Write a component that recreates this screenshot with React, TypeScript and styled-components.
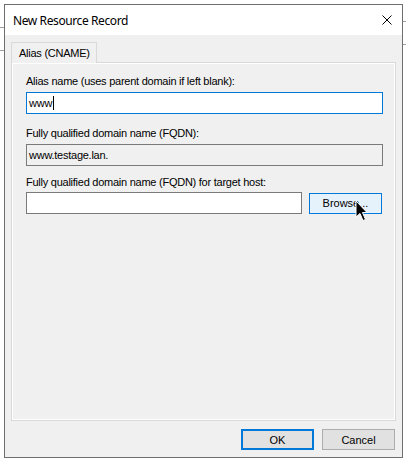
import React from "react";
import styled, { createGlobalStyle } from "styled-components";

const GlobalStyle = createGlobalStyle`
  html, body { margin: 0; padding: 0; background: #ffffff; }
  body { width: 406px; height: 461px; overflow: hidden; }
  * { box-sizing: border-box; }
`;

const Screen = styled.div`
  position: relative;
  width: 406px;
  height: 461px;
  padding: 4px 0 0 4px;
  background: #ffffff;
`;

const BackLine = styled.div<{ $top: number; $left: number; $width: number }>`
  position: absolute;
  top: ${(p) => p.$top}px;
  left: ${(p) => p.$left}px;
  width: ${(p) => p.$width}px;
  height: 1px;
  background: #a0a0a0;
`;

const Window = styled.div`
  position: relative;
  width: 399px;
  height: 454px;
  border: 1px solid #6f6f6f;
  display: flex;
  flex-direction: column;
  background: #f0f0f0;
`;

const TitleBar = styled.div`
  height: 30px;
  background: #ffffff;
  display: flex;
  align-items: center;
  justify-content: space-between;
  padding: 0 9px 0 8px;
  font-family: "Noto Sans", "Open Sans", sans-serif;
  font-size: 12px;
  letter-spacing: -0.4px;
  color: #000;
`;

const CloseIcon = styled.svg`
  width: 10px;
  height: 10px;
  margin-right: 1px;
  margin-top: -1px;
`;

const Body = styled.div`
  flex: 1;
  display: flex;
  flex-direction: column;
  padding: 7px 6px 7px 6px;
  font-family: "Liberation Sans", Arial, sans-serif;
  font-size: 11px;
  letter-spacing: -0.25px;
  color: #000;
`;

const TabStrip = styled.div`
  display: flex;
  height: 20px;
  position: relative;
  z-index: 1;
`;

const Tab = styled.div`
  width: 86px;
  height: 21px;
  border: 1px solid #d9d9d9;
  border-bottom: none;
  background: #f0f0f0;
  display: flex;
  align-items: center;
  padding: 0 0 1px 7px;
  white-space: nowrap;
`;

const Panel = styled.div`
  width: 385px;
  height: 359px;
  border: 1px solid #d9d9d9;
  box-shadow: inset 0 0 0 1px #ffffff;
  display: flex;
  flex-direction: column;
  padding: 9px 11px 0 14px;
`;

const Label = styled.div`
  height: 18px;
  display: flex;
  align-items: center;
  white-space: nowrap;
`;

const Field = styled.div<{ $tone: "focus" | "disabled" | "normal"; $width?: number }>`
  width: ${(p) => (p.$width ? `${p.$width}px` : "357px")};
  height: 22px;
  border: 1px solid
    ${(p) => (p.$tone === "focus" ? "#0078d7" : "#7a7a7a")};
  background: ${(p) => (p.$tone === "disabled" ? "#f0f0f0" : "#ffffff")};
  display: flex;
  align-items: center;
  padding: 0 0 0 2px;
`;

const Caret = styled.span`
  display: inline-block;
  width: 1px;
  height: 14px;
  background: #000;
  margin-left: 1px;
`;

const Group = styled.div<{ $gap: number; $inner: number }>`
  display: flex;
  flex-direction: column;
  gap: ${(p) => p.$inner}px;
  margin-top: ${(p) => p.$gap}px;
`;

const Row = styled.div`
  display: flex;
  align-items: center;
  gap: 7px;
`;

const Button = styled.div<{ $focus?: boolean; $hover?: boolean }>`
  position: relative;
  width: 73px;
  height: 21px;
  border: 1px solid ${(p) => (p.$focus || p.$hover ? "#0078d7" : "#adadad")};
  box-shadow: ${(p) => (p.$focus ? "inset 0 0 0 1px #0078d7" : "none")};
  background: ${(p) => (p.$hover ? "#e5f1fb" : "#e1e1e1")};
  display: flex;
  align-items: center;
  justify-content: center;
  letter-spacing: 0;
`;

const Footer = styled.div`
  margin-top: auto;
  display: flex;
  justify-content: flex-end;
  gap: 8px;
  padding-right: 1px;
`;

const Cursor = styled.svg`
  position: absolute;
  left: 350px;
  top: 195px;
  width: 13px;
  height: 22px;
`;

export default function App() {
  return (
    <>
      <GlobalStyle />
      <Screen>
        <BackLine $top={27} $left={0} $width={4} />
        <BackLine $top={50} $left={0} $width={4} />
        <BackLine $top={21} $left={403} $width={3} />
        <BackLine $top={44} $left={403} $width={3} />
        <Window>
          <TitleBar>
            <span>New Resource Record</span>
            <CloseIcon viewBox="0 0 10 10">
              <path d="M0.5 0.5 L9.5 9.5 M9.5 0.5 L0.5 9.5" stroke="#000" strokeWidth="1" fill="none" />
            </CloseIcon>
          </TitleBar>
          <Body>
            <TabStrip>
              <Tab>Alias (CNAME)</Tab>
            </TabStrip>
            <Panel>
              <Group $gap={0} $inner={2}>
                <Label>Alias name (uses parent domain if left blank):</Label>
                <Field $tone="focus">
                  www<Caret />
                </Field>
              </Group>
              <Group $gap={10} $inner={2}>
                <Label>Fully qualified domain name (FQDN):</Label>
                <Field $tone="disabled">www.testage.lan.</Field>
              </Group>
              <Group $gap={7} $inner={1}>
                <Label>Fully qualified domain name (FQDN) for target host:</Label>
                <Row>
                  <Field $tone="normal" $width={276} />
                  <Button $hover>Browse...</Button>
                </Row>
              </Group>
            </Panel>
            <Footer>
              <Button $focus>OK</Button>
              <Button>Cancel</Button>
            </Footer>
          </Body>
          <Cursor viewBox="0 0 13 22">
            <path
              d="M1 1 L1 17 L5 13.5 L8 20.5 L10.5 19.5 L7.5 12.5 L12 12.5 Z"
              fill="#000"
              stroke="#fff"
              strokeWidth="1"
              strokeLinejoin="round"
            />
          </Cursor>
        </Window>
      </Screen>
    </>
  );
}
